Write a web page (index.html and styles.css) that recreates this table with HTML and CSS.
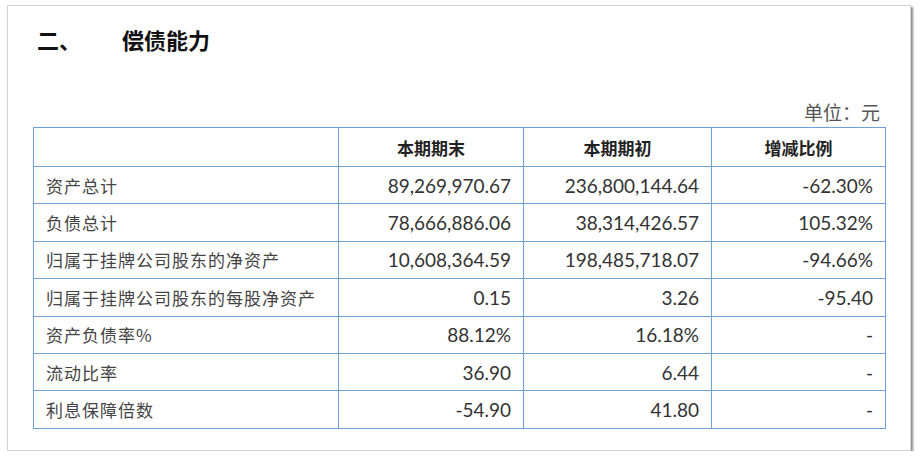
FILE: index.html
```html
<!DOCTYPE html>
<html lang="zh-CN">
<head>
<meta charset="utf-8">
<title>偿债能力</title>
<link rel="stylesheet" href="styles.css">
</head>
<body>
<div class="card">
  <h2 class="title"><span class="num">二、</span><span class="name">偿债能力</span></h2>
  <div class="unit">单位：元</div>
  <table class="data">
    <colgroup>
      <col class="c1"><col class="c2"><col class="c3"><col class="c4">
    </colgroup>
    <thead>
      <tr><th></th><th>本期期末</th><th>本期期初</th><th>增减比例</th></tr>
    </thead>
    <tbody>
      <tr><td class="label">资产总计</td><td>89,269,970.67</td><td>236,800,144.64</td><td>-62.30%</td></tr>
      <tr><td class="label">负债总计</td><td>78,666,886.06</td><td>38,314,426.57</td><td>105.32%</td></tr>
      <tr><td class="label">归属于挂牌公司股东的净资产</td><td>10,608,364.59</td><td>198,485,718.07</td><td>-94.66%</td></tr>
      <tr><td class="label">归属于挂牌公司股东的每股净资产</td><td>0.15</td><td>3.26</td><td>-95.40</td></tr>
      <tr><td class="label">资产负债率%</td><td>88.12%</td><td>16.18%</td><td>-</td></tr>
      <tr><td class="label">流动比率</td><td>36.90</td><td>6.44</td><td>-</td></tr>
      <tr><td class="label">利息保障倍数</td><td>-54.90</td><td>41.80</td><td>-</td></tr>
    </tbody>
  </table>
</div>
</body>
</html>
```

FILE: styles.css
```css
html, body {
  margin: 0;
  padding: 0;
  background: #ffffff;
}

.card {
  margin: 5px 0 0 7px;
  width: 904px;
  height: 446px;
  border: 1px solid #d4d4d4;
  box-shadow: 2px 2px 2px #8a8a8a;
  background: #ffffff;
  padding: 18px 26px 0 25px;
  box-sizing: border-box;
}

.title {
  margin: 0;
  padding-left: 4px;
  font-family: "Noto Sans CJK SC", sans-serif;
  font-weight: 700;
  font-size: 22px;
  line-height: 30px;
  color: #111;
}

.title .num {
  display: inline-block;
  width: 85px;
}

.unit {
  margin-top: 46px;
  padding-right: 4px;
  text-align: right;
  font-family: "Noto Sans CJK SC", serif;
  font-size: 19px;
  line-height: 24px;
  color: #555;
}

.data {
  margin-top: 3px;
  width: 852px;
  border-collapse: collapse;
  table-layout: fixed;
}

.c1 { width: 305px; }
.c2 { width: 185px; }
.c3 { width: 188px; }
.c4 { width: 174px; }

.data th,
.data td {
  border: 1px solid #6f9fdc;
  padding: 0 12px;
}

.data th {
  height: 38px;
  font-family: "Noto Sans CJK SC", sans-serif;
  font-weight: 700;
  font-size: 17px;
  color: #222;
  text-align: center;
}

.data td {
  height: 36.4px;
  font-family: Lato, "Liberation Sans", sans-serif;
  font-size: 19px;
  color: #333;
  text-align: right;
}

.data td.label {
  font-family: "Noto Sans CJK SC", sans-serif;
  font-size: 17px;
  letter-spacing: 1px;
  color: #444;
  text-align: left;
}
```
